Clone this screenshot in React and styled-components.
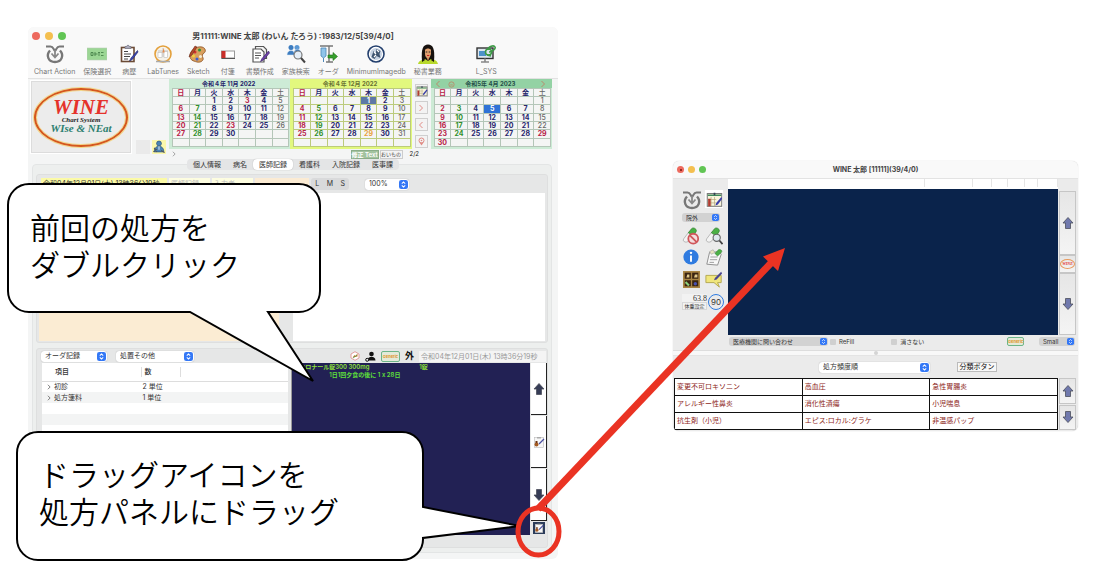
import React, { useState } from "react";
import styled, { createGlobalStyle, css } from "styled-components";

const GlobalStyle = createGlobalStyle`
  * {
    box-sizing: border-box;
  }
  body {
    margin: 0;
    background: #fff;
    font-family: Inter, "Noto Sans CJK JP", sans-serif;
    font-size: 7px;
    line-height: 10px;
    color: #333;
  }
  button, input, select {
    font: inherit;
    color: inherit;
    margin: 0;
    padding: 0;
    border: 0;
    background: none;
  }
  svg {
    display: block;
    flex: none;
  }
`;

const Slide = styled.main`
  position: relative;
  display: grid;
  grid-template-columns: 530fr 405fr;
  gap: 115px;
  align-items: start;
  min-height: 580px;
  padding: 27px 18px 20px 28px;
  overflow: hidden;
`;

/* ---------- window parts ---------- */

const Window = styled.section`
  min-width: 0;
  border-radius: 6px;
  background: #f4f5f5;
  overflow: hidden;
`;

const OrderWindow = styled(Window)`
  margin-top: 134px;
  background: #ebebeb;
  box-shadow: 0 0 1px #bbb;
`;

const TitleBar = styled.header`
  display: grid;
  grid-template-columns: 1fr auto 1fr;
  align-items: center;
  height: 17px;
  padding: 0 4px;
  background: #f9f9f9;
`;

const Title = styled.h1`
  margin: 0;
  font-size: ${(p) => (p.$small ? "7px" : "8px")};
  font-weight: 700;
  color: #444;
  white-space: nowrap;
`;

const Lights = styled.div`
  display: flex;
  gap: ${(p) => (p.$small ? "4px" : "5px")};
`;

const Light = styled.button`
  display: grid;
  place-items: center;
  width: ${(p) => (p.$small ? "7px" : "8px")};
  height: ${(p) => (p.$small ? "7px" : "8px")};
  border-radius: 50%;
  background: ${(p) => p.$color};
`;

const Dot = styled.span`
  width: 2px;
  height: 2px;
  border-radius: 50%;
  background: #7a130d;
`;

const Toolbar = styled.nav`
  display: flex;
  gap: 8px;
  height: 35px;
  padding: 0 6px;
  background: #f9f9f9;
  border-bottom: 1px solid #e2e2e2;
`;

const ToolButton = styled.button`
  display: flex;
  flex-direction: column;
  align-items: center;
  gap: 3px;
  color: #777;
  white-space: nowrap;
  margin-left: ${(p) => (p.$apart ? "26px" : "0")};
`;

const TopArea = styled.div`
  display: flex;
  height: 80px;
  padding: 0 6px 0 2px;
`;

const LogoBox = styled.button`
  display: grid;
  place-items: center;
  width: 102px;
  height: 74px;
  margin-top: 1px;
  background: #ececec;
  border: 1px solid #fff;
  outline: 1px solid #dcdcdc;
  outline-offset: -2px;
`;

const LogoOval = styled.span`
  display: flex;
  flex-direction: column;
  align-items: center;
  width: 94px;
  height: 59px;
  padding-top: 7px;
  border: 2px solid #d6581c;
  border-radius: 50%;
  box-shadow: 0 0 0 1px #f3d88a, inset 0 0 0 1px #f3d88a;
  font-family: "Liberation Serif", serif;
  font-style: italic;
  font-weight: 700;
  white-space: nowrap;
`;

const LogoName = styled.span`
  font-size: 21px;
  line-height: 20px;
  color: #e5322b;
`;

const LogoSystem = styled.span`
  font-size: 7px;
  line-height: 7px;
  color: #222;
`;

const LogoMotto = styled.span`
  font-size: 11px;
  line-height: 9px;
  color: #2c7f70;
`;

const SideIcons = styled.div`
  display: flex;
  align-items: flex-end;
  gap: 2px;
  width: 37px;
  height: 75px;
  padding-left: 4px;
`;

const BlankBox = styled.span`
  width: 14px;
  height: 14px;
  background: #eaeaea;
`;

const PersonButton = styled.button`
  width: 14px;
  height: 14px;
  background: #fbf7ab;
`;

const CalendarArea = styled.div`
  flex: 1;
  min-width: 0;
`;

const CalendarRow = styled.div`
  display: flex;
  height: 70px;
`;

const CalendarBox = styled.div`
  flex: 1;
  padding: 0 1px 0 3px;
  background: ${(p) => p.$bg};
`;

const CalendarTitle = styled.div`
  display: grid;
  grid-template-columns: 1fr auto 1fr;
  align-items: center;
  height: 9px;
  margin: 0 -1px 0 -3px;
  padding: 0 5px 0 3px;
  background: ${(p) => p.$bg};
  font-weight: 700;
  font-size: 6px;
  color: ${(p) => p.$color};
`;

const CalendarNav = styled.span`
  display: flex;
  align-items: center;
  gap: 6px;
  justify-content: ${(p) => (p.$end ? "flex-end" : "flex-start")};
`;

const Days = styled.table`
  width: 100%;
  height: 59px;
  table-layout: fixed;
  border-collapse: collapse;
`;

const dayColors = {
  red: "#b72046",
  green: "#2f8f2a",
  navy: "#25246b",
  sat: "#666",
  orange: "#e9a13b",
  pick: "#fff",
};

const Day = styled.td`
  padding: 0;
  height: 8px;
  border: 1px solid ${(p) => p.$line};
  background: ${(p) => p.$bg || "#f4f5f4"};
  color: ${(p) => dayColors[p.$tone]};
  font-size: 7px;
  line-height: 7px;
  font-weight: ${(p) => (p.$tone === "sat" ? 500 : 700)};
  text-align: center;
`;

const PagerColumn = styled.div`
  display: flex;
  flex-direction: column;
  gap: 4px;
  width: 19px;
  padding: 5px 3px 0;
`;

const PagerButton = styled.button`
  display: grid;
  place-items: center;
  width: 13px;
  height: 13px;
  border: 1px solid #cfcfcf;
  background: #f3f3f3;
`;

const CalendarFoot = styled.div`
  display: flex;
  align-items: center;
  gap: 1px;
  height: 10px;
  padding: 0 133px 0 2px;
`;

const FixText = styled.button`
  margin-left: auto;
  width: 28px;
  height: 9px;
  background: #a3c39f;
  border: 1px solid #8aad88;
  color: #fff;
  font-size: 6px;
  line-height: 7px;
  font-weight: 600;
  white-space: nowrap;
`;

const Memo = styled(FixText)`
  margin-left: 0;
  width: 23px;
  background: #f4f4f4;
  border-color: #ccc;
  color: #444;
  font-size: 5px;
  font-weight: 400;
`;

const PageCount = styled.span`
  padding-left: 6px;
  font-size: 6px;
  color: #222;
`;

const Tabs = styled.div`
  position: relative;
  display: flex;
  justify-content: space-between;
  width: 212px;
  height: 11px;
  margin: 0 auto;
  border-radius: 4px;
  background: #e4e5e6;
`;

const Tab = styled.button`
  flex: auto;
  border-radius: 4px;
  line-height: 11px;
  white-space: nowrap;
  ${(p) =>
    p.$active &&
    css`
      background: #fff;
      box-shadow: 0 0 1px #999;
    `}
`;

const Body = styled.div`
  display: flex;
  flex-direction: column;
  gap: 5px;
  margin: -6px 6px 6px 4px;
  padding: 9px 3px 4px;
  border: 1px solid #e3e5e5;
  border-radius: 4px;
  background: #edefee;
`;

const Panel = styled.div`
  border: 1px solid #dedfdf;
  border-radius: 3px;
  background: #e6e7e7;
`;

const ChartHead = styled.div`
  display: flex;
  align-items: center;
  gap: 2px;
  height: 18px;
  padding-left: 4px;
`;

const Strip = styled.span`
  width: ${(p) => p.$w}px;
  height: 12px;
  padding: 1px 2px 0;
  background: ${(p) => p.$bg};
  color: ${(p) => p.$color};
  white-space: nowrap;
  overflow: hidden;
`;

const SizeTabs = styled.div`
  display: flex;
  width: 38px;
  height: 12px;
  margin-right: 14px;
  border-radius: 3px;
  background: #d9dadb;
`;

const SizeTab = styled.button`
  flex: 1;
`;

const ChartBody = styled.div`
  display: grid;
  grid-template-columns: 240fr 252fr;
  gap: 14px;
  height: 149px;
  padding: 0 2px 1px;
`;

const Note = styled.div`
  background: ${(p) => p.$bg};
`;

const SelectBox = styled.span`
  position: relative;
  display: block;
  width: ${(p) => p.$w}px;
  height: ${(p) => (p.$grey ? "9px" : "11px")};
  border-radius: 3px;
  background: ${(p) => (p.$grey ? "#d2d2d2" : "#fff")};
  box-shadow: ${(p) => (p.$grey ? "none" : "0 0 1px #999")};

  select {
    display: block;
    width: 100%;
    height: 100%;
    padding: 0 10px 0 4px;
    appearance: none;
    font-size: ${(p) => (p.$grey ? "6px" : "7px")};
  }
  svg {
    position: absolute;
    top: 1px;
    right: 1px;
    pointer-events: none;
  }
`;

const OrderHead = styled.div`
  display: flex;
  align-items: center;
  gap: 5px;
  height: 14px;
  padding: 0 1px 0 4px;
`;

const Gap = styled.span`
  flex: 1;
`;

const Outside = styled.strong`
  font-size: 9px;
  color: #111;
`;

const DateInput = styled.input`
  width: 127px;
  height: 11px;
  padding: 0 2px;
  background: #f4f4f4;
  color: #999;
`;

const OrderBody = styled.div`
  display: flex;
  height: 172px;
  padding-left: 5px;
`;

const TreeBox = styled.div`
  flex: 253;
  margin-right: 3px;
  background: repeating-linear-gradient(#fff 0 11px, #f3f4f4 11px 22px) 0 18px;
`;

const Tree = styled.table`
  width: 100%;
  border-collapse: collapse;
  table-layout: fixed;

  th {
    height: 18px;
    padding: 0 0 0 13px;
    background: #fff;
    border-bottom: 1px solid #ddd;
    font-weight: 500;
    text-align: left;
  }
  th + th {
    padding-left: 4px;
  }
  td {
    height: 11px;
    padding: 0 2px;
  }
`;

const TreeCell = styled.span`
  display: flex;
  align-items: center;
  gap: 2px;
  padding-left: 2px;
`;

const HeadMark = styled.span`
  display: block;
  border-left: ${(p) => (p.$first ? "0" : "1px solid #ddd")};
  margin-left: ${(p) => (p.$first ? "0" : "-4px")};
  padding-left: ${(p) => (p.$first ? "0" : "3px")};
  height: 10px;
`;

const OrderNote = styled.div`
  flex: 237;
  padding: 0 0 0 7px;
  background: #222154;
  border-left: 1px solid #999;
  color: #5fe03a;
  font-size: 6px;
  line-height: 8px;
  font-weight: 600;
`;

const DrugLine = styled.div`
  display: grid;
  grid-template-columns: 120px 1fr;
  color: #8fe03a;
`;

const UsageLine = styled.div`
  padding-left: 30px;
`;

const OrderSide = styled.div`
  display: flex;
  flex-direction: column;
  gap: 1px;
  width: 17px;
  padding-left: 1px;
`;

const SideButton = styled.button`
  display: grid;
  place-items: center;
  height: 52px;
  background: #fff;
  border-right: 1px solid #222;
  border-bottom: 1px solid #222;
`;

const DragButton = styled.button`
  align-self: center;
  width: 12px;
  height: 12px;
  padding: 1px;
  background: #2b3c5a;
`;

const PanelFoot = styled.div`
  height: 12px;
`;

/* ---------- prescription window ---------- */

const RxTop = styled.div`
  display: grid;
  grid-template-columns: 55px 1fr 20px;
  border-top: 1px solid #e3e3e3;
`;

const Palette = styled.div`
  display: flex;
  flex-direction: column;
  gap: 5px;
  padding: 11px 4px 0 9px;
`;

const IconGrid = styled.div`
  display: grid;
  grid-template-columns: 18px 18px;
  gap: 3px 5px;
`;

const IconButton = styled.button`
  display: grid;
  place-items: center;
  height: ${(p) => p.$h || 18}px;
  background: ${(p) => (p.$lit ? "#fff" : "none")};
`;

const WeightRow = styled.div`
  display: flex;
  align-items: center;
  gap: 1px;
`;

const Weight = styled.div`
  width: 25px;
  font-size: 6px;
  line-height: 8px;

  input {
    display: block;
    width: 100%;
    height: 8px;
    background: #f2f2f2;
    font-family: "Liberation Serif", serif;
    font-size: 8px;
    text-align: right;
  }
  button {
    display: block;
    width: 100%;
    height: 8px;
    background: #f2f2f2;
    border: 1px solid #d8d8d8;
    font-size: 5px;
    line-height: 6px;
    white-space: nowrap;
  }
`;

const RxCenter = styled.div`
  min-width: 0;
`;

const Columns = styled.div`
  display: grid;
  grid-template-columns: 196fr 48fr 19fr 16fr 17fr 13fr 20fr;
  height: 10px;
  background: #fff;
`;

const Column = styled.span`
  height: 8px;
  border-right: 1px solid #e5e5e5;
`;

const DropPanel = styled.div`
  height: 146px;
  background: #0a234b;
`;

const RxScroll = styled.div`
  display: flex;
  flex-direction: column;
  padding: 12px 2px 0 1px;
`;

const RxButton = styled.button`
  display: grid;
  place-items: center;
  height: ${(p) => p.$h}px;
  background: linear-gradient(#e6e6e6, #f4f4f4);
  border: 1px solid #c6c6c6;
`;

const MiniLogo = styled.span`
  width: 15px;
  height: 10px;
  border: 1px solid #e89a5c;
  border-radius: 50%;
  font-family: "Liberation Serif", serif;
  font-size: 4px;
  line-height: 7px;
  font-style: italic;
  font-weight: 700;
  color: #e5322b;
`;

const RxFoot = styled.div`
  display: flex;
  align-items: center;
  height: 15px;
  padding: 0 3px 2px 56px;
  font-size: 6px;
`;

const Check = styled.label`
  display: flex;
  align-items: center;
  gap: 3px;
  margin: 0 ${(p) => (p.$wide ? "35px" : "auto")} 0 2px;

  input {
    width: 6px;
    height: 6px;
    appearance: none;
    border-radius: 1px;
    background: #d0d0d0;
  }
`;

const TagButton = styled.button`
  margin-right: 15px;
`;

const Splitter = styled.div`
  display: grid;
  place-items: center;
  height: 6px;
  background: #f8f8f8;
  border-top: 1px solid #ddd;
  border-bottom: 1px solid #e4e4e4;
`;

const Grip = styled.span`
  width: 4px;
  height: 4px;
  border-radius: 50%;
  background: #d4d4d4;
`;

const SetBar = styled.div`
  display: flex;
  align-items: center;
  justify-content: flex-end;
  gap: 27px;
  height: 22px;
  padding-right: 81px;
`;

const KindButton = styled.button`
  width: 40px;
  height: 10px;
  border: 1px solid #bbb;
  background: #f8f8f8;
  line-height: 8px;
  color: #111;
  white-space: nowrap;
`;

const SetArea = styled.div`
  display: grid;
  grid-template-columns: 1fr 20px;
  padding: 0 0 1px 1px;
`;

const SetTable = styled.table`
  width: 100%;
  border-collapse: collapse;
  table-layout: fixed;
  background: #fff;

  td {
    height: 17px;
    padding: 0 2px;
    border: 1px solid #111;
    color: #8c1d18;
  }
`;

const SetScroll = styled.div`
  display: grid;
  gap: 1px;
  padding: 0 2px 0 1px;
`;

/* ---------- annotations over the windows ---------- */

const Marks = styled.svg`
  position: absolute;
  left: 0;
  top: 0;
  pointer-events: none;
`;

const BubbleText = styled.p`
  position: absolute;
  left: ${(p) => p.$x}px;
  top: ${(p) => p.$y}px;
  margin: 0;
  font-family: "Noto Sans CJK JP", sans-serif;
  font-size: 30px;
  line-height: 37px;
  font-weight: 350;
  color: #000;
  white-space: nowrap;
`;

/* ---------- icons ---------- */

const Svg = ({ size = 20, box = 20, children }) => (
  <svg width={size} height={size} viewBox={`0 0 ${box} ${box}`} fill="none" aria-hidden="true">
    {children}
  </svg>
);

const ActionIcon = () => (
  <Svg>
    <path d="M1 2.500h4.500c3 0 2.500 2.500 4.500 4.500M19 2.500h-4.500c-3 0-2.500 2.500-4.500 4.500" stroke="#777" strokeWidth="2" />
    <path d="M5 6.500c-4.500 5-1.500 11.500 5 11.500s9.500-6.500 5-11.500" stroke="#777" strokeWidth="2.400" />
    <path d="M10 6v7M6.500 9.500L10 13.500l3.500-4" stroke="#888" strokeWidth="1.800" />
  </Svg>
);

const InsuranceIcon = () => (
  <Svg>
    <rect x="0" y="4" width="20" height="12" fill="#9bd694" stroke="#b8ccb5" strokeWidth=".6" />
    <path d="M4 8.500h2v3H4zM8 8v4M7.500 10h3M11 8.500h2M12 8.500v3.500M14 8.500h2.500M14 11.500h2.500" stroke="#3f7a43" strokeWidth=".8" />
  </Svg>
);

const ClipIcon = ({ size = 20 }) => (
  <Svg size={size}>
    <rect x="2.500" y="3.500" width="12.500" height="14" fill="#fff" stroke="#6b4a35" strokeWidth="1.600" />
    <path d="M6 4.500V2.500h1.500C8 .8 10 .8 10.500 2.500H12v2z" fill="#aab" stroke="#667" strokeWidth=".6" />
    <path d="M5 7.500h4M5 10h7M5 12.500h6M5 15h4" stroke="#444" />
    <path d="M18.500 6.500L12 14l-1.500 3 2.800-1.500L19 8z" fill="#3a44b8" stroke="#22265f" strokeWidth=".6" />
  </Svg>
);

const LabIcon = () => (
  <Svg>
    <circle cx="10" cy="10" r="8" fill="#f6f2ea" stroke="#e3a03c" strokeWidth="1.600" />
    <path d="M5 7h10M10 4v9" stroke="#bbb" strokeWidth=".8" />
    <rect x="5" y="8.500" width="4" height="5" fill="#fff" stroke="#bbb" strokeWidth=".6" />
    <rect x="11" y="7.500" width="3.500" height="6" fill="#fff" stroke="#bbb" strokeWidth=".6" />
    <path d="M9.300 8.500l1.500-4.500.8 4.500z" fill="#e88a4a" />
    <path d="M3 17.500h14" stroke="#aaa" strokeWidth="1.600" />
  </Svg>
);

const PaletteIcon = () => (
  <Svg>
    <path d="M2 12C2 6 8 2 14 3c4 1 4 5 2 6s-2 3-1 5-2 5-6 4-7-2-7-6z" fill="#d9a05e" stroke="#8a4f22" strokeWidth=".8" />
    <circle cx="7" cy="8" r="1.500" fill="#d32f2f" />
    <circle cx="11.500" cy="6" r="1.500" fill="#2f8f3a" />
    <circle cx="5.500" cy="12" r="1.500" fill="#f2d03a" />
    <circle cx="12.500" cy="12.500" r="1.500" fill="#f6ead2" />
    <circle cx="9" cy="15" r="1.500" fill="#3a5fd3" />
    <path d="M7 2L2 10l-1 3 3-2 5-8z" fill="#b5482a" stroke="#5c2412" strokeWidth=".5" />
  </Svg>
);

const StickyIcon = () => (
  <Svg>
    <rect x="3.500" y="7" width="13" height="7" fill="#fff" stroke="#999" />
    <rect x="3.500" y="7" width="4" height="7" fill="#c92f2a" />
    <path d="M3.500 14.500h13.500" stroke="#555" />
  </Svg>
);

const DocIcon = () => (
  <Svg>
    <path d="M5.500 2.500h8l3 3v9h-11z" fill="#f4f4f4" stroke="#555" strokeWidth="1.200" />
    <path d="M3 5h8l3 3v10H3z" fill="#fff" stroke="#555" strokeWidth="1.200" />
    <path d="M5 9h6M5 11.500h6M5 14h4" stroke="#555" />
    <path d="M18.500 7L12 14.500l-1.500 3 3-1.500 6-7z" fill="#6b3fa8" stroke="#3a2365" strokeWidth=".6" />
  </Svg>
);

const FamilyIcon = () => (
  <Svg>
    <circle cx="5" cy="3.500" r="2.500" fill="#3c7cc0" />
    <circle cx="11" cy="3.500" r="2.500" fill="#5a97d4" />
    <path d="M1 11c0-6 8-6 8 0zM8 9c0-5 7-5 7 0z" fill="#3c7cc0" stroke="#d6e6f5" strokeWidth=".5" />
    <circle cx="12" cy="11" r="4" fill="#e4eef8" stroke="#777" strokeWidth="1.200" />
    <path d="M15 14l4 4.500" stroke="#444" strokeWidth="2" />
  </Svg>
);

const DripIcon = () => (
  <Svg>
    <path d="M2 2h13M11 2v16M8 18h7" stroke="#777" strokeWidth="1.400" />
    <path d="M3 4h5v8l-2.500 2L3 12z" fill="#8fc4ea" stroke="#4d88b8" strokeWidth=".8" />
    <path d="M5.500 14v4" stroke="#4d88b8" />
    <path d="M10 11h5V8.500l4.500 4-4.500 4V14h-5z" fill="#36a02d" stroke="#1f6d18" strokeWidth=".6" />
  </Svg>
);

const ImageDbIcon = () => (
  <Svg>
    <circle cx="10" cy="10" r="8" fill="#fff" stroke="#24406e" strokeWidth="1.600" />
    <circle cx="10" cy="10" r="6" fill="#c6d2e2" />
    <path d="M5.500 13l2-6 2 3 1-5 4 2-1 3 1 4-4-2-2 3z" fill="#3e5470" />
    <path d="M8 8l2 2M11 6l2 2M8 13l2-2" stroke="#fff" strokeWidth="1.200" />
  </Svg>
);

const SecretaryIcon = () => (
  <Svg>
    <path d="M4 17C3 5 5 .5 10 .5S17 5 16 17z" fill="#17120f" />
    <path d="M0 20c1-4 4-4 7-5l3 2 3-2c4 1 6 1 7 5z" fill="#b8d92c" />
    <path d="M8 12l2 5 2-5z" fill="#d08c5c" />
    <path d="M7 6c1-2 5-2 6 0v4c-1 3-2 4-3 4s-3-1-3-4z" fill="#e0a06f" />
    <path d="M7.700 8h1.600M10.700 8h1.600" stroke="#222" />
    <path d="M9 11.500h2.300" stroke="#c22" />
    <path d="M4 12l3 4-3 2zM16 12l-3 4 3 2z" fill="#17120f" />
  </Svg>
);

const SystemIcon = () => (
  <Svg>
    <rect x="1" y="4" width="16" height="10.500" fill="#dde6ee" stroke="#333" strokeWidth="1.400" />
    <path d="M3 7h7v5H3z" fill="#4d92c9" />
    <path d="M9 14.500v3M5 18h8" stroke="#888" strokeWidth="1.600" />
    <circle cx="12.500" cy="8" r="3" stroke="#3d9a46" strokeWidth="1.600" />
    <path d="M12 6c0-4 6-5 7-3s-3 5-6 5M11 11l4 1" stroke="#3d9a46" strokeWidth="1.600" />
  </Svg>
);

const PersonIcon = () => (
  <Svg size={14}>
    <circle cx="10" cy="5" r="3.500" fill="#4b83b5" stroke="#2d5578" />
    <path d="M3 17c0-11 14-11 14 0z" fill="#4b83b5" stroke="#2d5578" />
    <path d="M3 11l4 6M2 17l5-4M13 15l5 3" stroke="#555" strokeWidth="1.500" />
    <path d="M10 9v5" stroke="#dfe9f2" strokeWidth="1.500" />
  </Svg>
);

const ScheduleIcon = ({ size = 12 }) => (
  <Svg size={size}>
    <rect x="1.500" y="3" width="17" height="15" fill="#f9f5dc" stroke="#777" strokeWidth="1.200" />
    <path d="M2 5h16" stroke="#3f8a5a" strokeWidth="2" />
    <path d="M2 10h10M2 14h10M6 7v11M10 7v11" stroke="#b6a77a" strokeWidth=".8" />
    <path d="M2.500 9h3v9h-3z" fill="#b13b32" />
    <path d="M18 7l-6 7-1 3 3-1 5-7z" fill="#3a3fa8" />
    <path d="M9 2h2v3H9z" fill="#345" />
  </Svg>
);

const Chevron = ({ flip, color = "#e08a84", size = 8 }) => (
  <Svg size={size} box={8}>
    <path d={flip ? "M5.500 1L2.500 4l3 3" : "M2.500 1l3 3-3 3"} stroke={color} />
  </Svg>
);

const FaceIcon = () => (
  <Svg size={7} box={8}>
    <circle cx="4" cy="4" r="3" stroke="#b98a6c" />
    <path d="M2.500 4.500h3" stroke="#b98a6c" />
  </Svg>
);

const PinIcon = () => (
  <Svg size={9} box={9}>
    <circle cx="4.500" cy="3.500" r="2.500" stroke="#e08a84" />
    <path d="M4.500 8.500L2.500 5.500h4z" fill="#e08a84" />
    <circle cx="4.500" cy="3.500" r=".8" fill="#e08a84" />
  </Svg>
);

const UpDown = ({ size = 8 }) => (
  <Svg size={size} box={8}>
    <rect width="8" height="8" rx="2" fill="#3478f6" />
    <path d="M2.500 3.200L4 1.700l1.500 1.500M2.500 4.800L4 6.300l1.500-1.500" stroke="#fff" strokeWidth=".9" />
  </Svg>
);

const Arrow = ({ down, light }) => (
  <Svg size={12} box={12}>
    <path
      d={down ? "M6 11.500L1 6h2.500V.5h5V6H11z" : "M6 .5L1 6h2.500v5.500h5V6H11z"}
      fill={light ? "#7079ad" : "#363c56"}
      stroke="#4b4f5c"
      strokeWidth=".8"
    />
  </Svg>
);

const MortarIcon = ({ size = 12 }) => (
  <Svg size={size} box={12}>
    <rect x="1.500" y="1.500" width="9" height="10" fill="#f7f7f7" stroke="#bbb" strokeWidth=".6" />
    <path d="M4 2.500V1h4v1.500z" fill="#aaa" />
    <circle cx="3.500" cy="8.500" r="2" fill="#a35a22" />
    <path d="M2.500 5h2v2h-2z" fill="#6e3410" />
    <path d="M11 3L6 8" stroke="#4a4fa0" strokeWidth="1.300" />
  </Svg>
);

const HexIcon = () => (
  <Svg size={10} box={10}>
    <path d="M5 .7L9 3v4L5 9.300 1 7V3z" fill="#fff" stroke="#d88" strokeWidth=".8" />
    <path d="M2.500 6.500l2-2.500 1 1L7.500 2.500v3z" fill="#c9752f" />
    <path d="M3 7l4-3" stroke="#4a9a4a" strokeWidth=".8" />
  </Svg>
);

const DoctorIcon = () => (
  <Svg size={11} box={11}>
    <circle cx="6.500" cy="3" r="2.300" fill="#111" />
    <path d="M2.500 9.500c0-5 8-5 8 0z" fill="#111" />
    <circle cx="2.200" cy="8.800" r="1.500" fill="#e6e7e7" stroke="#111" />
  </Svg>
);

const TagArt = styled.span`
  display: block;
  width: ${(p) => (p.$small ? "17px" : "19px")};
  height: ${(p) => (p.$small ? "9px" : "11px")};
  border: 1px solid #6db588;
  border-radius: 2px;
  background: #e3ead9;
  color: #e0951f;
  font-size: 4px;
  line-height: ${(p) => (p.$small ? "7px" : "9px")};
  font-weight: 700;
  text-align: center;
`;

const Capsule = () => (
  <>
    <path d="M2 13L8 5l5 3-6 8c-3 2-7 0-5-3z" fill="#f4f4f4" stroke="#999" strokeWidth=".7" />
    <path d="M7 6.500L10.500 2c2-2.500 7 .5 5 3.500L12.500 10z" fill="#4bb046" stroke="#2f7c2c" strokeWidth=".7" />
  </>
);

const NoDrugIcon = () => (
  <Svg size={18}>
    <Capsule />
    <circle cx="12.500" cy="13" r="5.500" stroke="#d0565a" strokeWidth="2" fill="#f3dede" />
    <path d="M8.700 9.300l7.600 7.600" stroke="#d0565a" strokeWidth="2" />
  </Svg>
);

const FindDrugIcon = () => (
  <Svg size={18}>
    <Capsule />
    <circle cx="13" cy="12" r="4" fill="#dfe8f0" stroke="#666" strokeWidth="1.200" />
    <path d="M16 15l3.500 4" stroke="#444" strokeWidth="2" />
  </Svg>
);

const InfoIcon = () => (
  <Svg size={16}>
    <circle cx="10" cy="10" r="9.500" fill="#2f7be0" />
    <circle cx="10" cy="4.800" r="1.500" fill="#fff" />
    <path d="M10 8v8" stroke="#fff" strokeWidth="2.400" />
  </Svg>
);

const SheetIcon = () => (
  <Svg size={18}>
    <path d="M5 5l11-1 2 3-4 12-12-1z" fill="#f8f8f8" stroke="#888" />
    <path d="M6 10h8M5.500 13h8M5 16h5" stroke="#999" />
    <path d="M5 4l4-2 2 3-4 2z" fill="#e8e5c0" stroke="#999" strokeWidth=".6" />
    <path d="M11 6l4-4c2-1 5 1 3 3l-4 4z" fill="#4bb046" stroke="#2f7c2c" strokeWidth=".6" />
  </Svg>
);

const ShelfIcon = () => (
  <Svg size={17}>
    <rect x="1" y="1" width="18" height="18" fill="#3a2411" stroke="#a88443" strokeWidth="2" />
    <path d="M10 1v18M1 10h18" stroke="#a88443" strokeWidth="1.600" />
    <path d="M4 7.500h3.500V4H5zM13 7.500h4V4h-3z" fill="#e2c98a" />
    <path d="M3 13l4 4" stroke="#8bd07c" strokeWidth="2.400" />
    <circle cx="14.500" cy="15" r="2" fill="#4a50b0" />
  </Svg>
);

const CommentIcon = () => (
  <Svg size={18}>
    <path d="M1 6h17v8h-4l2 5-6-5H1z" fill="#f0e67c" stroke="#b0a44a" />
    <path d="M18 2l-7 7-1 2.500 3-1L19 4z" fill="#4a4690" />
  </Svg>
);

const DaysArt = styled.span`
  display: grid;
  place-items: center;
  width: 16px;
  height: 16px;
  border: 1px solid #2f7be0;
  border-radius: 50%;
  font-size: 8px;
  color: #333;
`;

/* ---------- data ---------- */

const tools = [
  ["Chart Action", ActionIcon],
  ["保険選択", InsuranceIcon],
  ["病歴", ClipIcon],
  ["LabTunes", LabIcon],
  ["Sketch", PaletteIcon],
  ["付箋", StickyIcon],
  ["書類作成", DocIcon],
  ["家族検索", FamilyIcon],
  ["オーダ", DripIcon],
  ["MinimumImagedb", ImageDbIcon],
  ["秘書業務", SecretaryIcon],
  ["L_SYS", SystemIcon],
];

const calendars = [
  { title: "令和４年 11月 2022", bg: "#cdebd6", head: "#cdebd6", line: "#b4c6b8", start: 2, last: 30, red: [3, 23], color: "#25246b" },
  { title: "令和４年 12月 2022", bg: "#e2f87e", head: "#e2f87e", line: "#bccb7c", start: 4, last: 31, red: [], orange: 29, pick: 1, pickBg: "#5d78a6", color: "#6b7434" },
  { title: "令和5年 4月 2023", bg: "#cdebd6", head: "#93d2a4", line: "#b4c6b8", start: 6, last: 30, red: [29], pick: 5, pickBg: "#2f72d6", color: "#25504a", arrows: true },
];

const weekdays = ["日", "月", "火", "水", "木", "金", "土"];
const tabNames = ["個人情報", "病名", "医師記録", "看護科", "入院記録", "医事課"];
const rxSets = [
  ["変更不可ロキソニン", "高血圧", "急性胃腸炎"],
  ["アレルギー性鼻炎", "消化性潰瘍", "小児喘息"],
  ["抗生剤（小児）", "エピス:ロカル:グラケ", "非温感パップ"],
];

const toneOf = (cal, day, col) => {
  if (day === cal.pick) return "pick";
  if (day === cal.orange) return "orange";
  if (col === 0 || cal.red.includes(day)) return "red";
  if (col === 1) return "green";
  return col === 6 ? "sat" : "navy";
};

function Calendar({ cal }) {
  const weeks = [0, 1, 2, 3, 4, 5];
  return (
    <CalendarBox $bg={cal.bg}>
      <CalendarTitle $bg={cal.head} $color={cal.color}>
        <CalendarNav>
          {cal.arrows && (
            <>
              <Chevron flip color="#b98a6c" />
              <FaceIcon />
            </>
          )}
        </CalendarNav>
        <span>{cal.title}</span>
        <CalendarNav $end>{cal.arrows && <Chevron color="#b98a6c" />}</CalendarNav>
      </CalendarTitle>
      <Days>
        <thead>
          <tr>
            {weekdays.map((name, col) => (
              <Day as="th" key={name} $line={cal.line} $tone={col === 0 ? "red" : col === 6 ? "sat" : "navy"}>
                {name}
              </Day>
            ))}
          </tr>
        </thead>
        <tbody>
          {weeks.map((week) => (
            <tr key={week}>
              {weekdays.map((name, col) => {
                const day = week * 7 + col - cal.start + 1;
                const shown = day > 0 && day <= cal.last;
                return (
                  <Day
                    key={name}
                    $line={cal.line}
                    $tone={toneOf(cal, day, col)}
                    $bg={shown && day === cal.pick ? cal.pickBg : undefined}
                  >
                    {shown ? day : ""}
                  </Day>
                );
              })}
            </tr>
          ))}
        </tbody>
      </Days>
    </CalendarBox>
  );
}

function Dropdown({ label, value, w, grey, className }) {
  return (
    <SelectBox $w={w} $grey={grey} className={className}>
      <select aria-label={label} defaultValue={value}>
        <option>{value}</option>
      </select>
      <UpDown size={grey ? 7 : 9} />
    </SelectBox>
  );
}

const TreatSelect = styled(Dropdown)`
  margin-left: 4px;
`;

function WindowLights({ small }) {
  return (
    <Lights $small={small}>
      <Light $small={small} $color="#ed6a5e" aria-label="閉じる">
        {small && <Dot />}
      </Light>
      <Light $small={small} $color="#f4bf4f" aria-label="しまう" />
      <Light $small={small} $color="#61c554" aria-label="拡大" />
    </Lights>
  );
}

function ChartWindow() {
  const [tab, setTab] = useState("医師記録");

  return (
    <Window>
      <TitleBar>
        <WindowLights />
        <Title>男11111:WINE 太郎 (わいん たろう) :1983/12/5[39/4/0]</Title>
      </TitleBar>
      <Toolbar>
        {tools.map(([name, Icon]) => (
          <ToolButton key={name} $apart={name === "L_SYS"}>
            <Icon />
            {name}
          </ToolButton>
        ))}
      </Toolbar>
      <TopArea>
        <LogoBox>
          <LogoOval>
            <LogoName>WINE</LogoName>
            <LogoSystem>Chart System</LogoSystem>
            <LogoMotto>WIse &amp; NEat</LogoMotto>
          </LogoOval>
        </LogoBox>
        <SideIcons>
          <BlankBox />
          <PersonButton aria-label="患者">
            <PersonIcon />
          </PersonButton>
        </SideIcons>
        <CalendarArea>
          <CalendarRow>
            <Calendar cal={calendars[0]} />
            <Calendar cal={calendars[1]} />
            <PagerColumn>
              <PagerButton aria-label="予定"><ScheduleIcon /></PagerButton>
              <PagerButton aria-label="次"><Chevron /></PagerButton>
              <PagerButton aria-label="前"><Chevron flip /></PagerButton>
              <PagerButton aria-label="今日"><PinIcon /></PagerButton>
            </PagerColumn>
            <Calendar cal={calendars[2]} />
          </CalendarRow>
          <CalendarFoot>
            <Chevron color="#888" size={6} />
            <FixText>修正 Text</FixText>
            <Memo>おいもの</Memo>
            <PageCount>2/2</PageCount>
          </CalendarFoot>
        </CalendarArea>
      </TopArea>
      <Tabs>
        {tabNames.map((name) => (
          <Tab key={name} $active={name === tab} onClick={() => setTab(name)}>
            {name}
          </Tab>
        ))}
      </Tabs>
      <Body>
        <Panel>
          <ChartHead>
            <Strip $w={126} $bg="#fbfaa6" $color="#333">令和04年12月01日(木) 13時36分19秒</Strip>
            <Strip $w={41} $bg="#fdfde0" $color="#bbb">医師記録</Strip>
            <Strip $w={41} $bg="#fdfde0" $color="#bbb">入力者</Strip>
            <Strip $w={54} $bg="#fbebd3" $color="#bbb" />
            <SizeTabs>
              <SizeTab>L</SizeTab>
              <SizeTab>M</SizeTab>
              <SizeTab>S</SizeTab>
            </SizeTabs>
            <Dropdown label="表示倍率" value="100%" w={44} />
          </ChartHead>
          <ChartBody>
            <Note $bg="#fbecd3" />
            <Note $bg="#fff" />
          </ChartBody>
        </Panel>
        <Panel>
          <OrderHead>
            <Dropdown label="記録" value="オーダ記録" w={66} />
            <TreatSelect label="処置" value="処置その他" w={78} />
            <Gap />
            <HexIcon />
            <DoctorIcon />
            <TagArt>Generic</TagArt>
            <Outside>外</Outside>
            <DateInput aria-label="日時" defaultValue="令和04年12月01日(木) 13時36分19秒" />
          </OrderHead>
          <OrderBody>
            <TreeBox>
              <Tree>
                <colgroup>
                  <col width="40%" />
                  <col width="16%" />
                  <col />
                </colgroup>
                <thead>
                  <tr>
                    <th><HeadMark $first>項目</HeadMark></th>
                    <th><HeadMark>数</HeadMark></th>
                    <th><HeadMark /></th>
                  </tr>
                </thead>
                <tbody>
                  <tr>
                    <td><TreeCell><Chevron color="#555" size={6} />初診</TreeCell></td>
                    <td colSpan={2}>2 単位</td>
                  </tr>
                  <tr>
                    <td><TreeCell><Chevron color="#555" size={6} />処方箋料</TreeCell></td>
                    <td colSpan={2}>1 単位</td>
                  </tr>
                </tbody>
              </Tree>
            </TreeBox>
            <OrderNote>
              <DrugLine>
                <span>カロナール錠300 300mg</span>
                <span>1錠</span>
              </DrugLine>
              <UsageLine>1日1回夕食の後に 1 x 28日</UsageLine>
            </OrderNote>
            <OrderSide>
              <SideButton aria-label="上へ"><Arrow /></SideButton>
              <SideButton aria-label="処方"><MortarIcon /></SideButton>
              <SideButton aria-label="下へ"><Arrow down /></SideButton>
              <DragButton aria-label="ドラッグ"><MortarIcon size={10} /></DragButton>
            </OrderSide>
          </OrderBody>
          <PanelFoot />
        </Panel>
      </Body>
    </Window>
  );
}

function PrescriptionWindow() {
  return (
    <OrderWindow>
      <TitleBar>
        <WindowLights small />
        <Title $small>WINE 太郎 [11111](39/4/0)</Title>
      </TitleBar>
      <RxTop>
        <Palette>
          <IconGrid>
            <IconButton aria-label="Chart Action"><ActionIcon /></IconButton>
            <IconButton $lit aria-label="予定"><ScheduleIcon size={17} /></IconButton>
          </IconGrid>
          <Dropdown label="院内外" value="院外" w={38} grey />
          <IconGrid>
            <IconButton aria-label="中止"><NoDrugIcon /></IconButton>
            <IconButton aria-label="薬剤検索"><FindDrugIcon /></IconButton>
            <IconButton aria-label="情報"><InfoIcon /></IconButton>
            <IconButton aria-label="処方箋"><SheetIcon /></IconButton>
            <IconButton $h={20} aria-label="薬棚"><ShelfIcon /></IconButton>
            <IconButton $h={20} aria-label="コメント"><CommentIcon /></IconButton>
          </IconGrid>
          <WeightRow>
            <Weight>
              <input aria-label="体重" defaultValue="63.8" />
              <button>体重設定</button>
            </Weight>
            <DaysArt>90</DaysArt>
          </WeightRow>
        </Palette>
        <RxCenter>
          <Columns>
            <Column />
            <Column />
            <Column />
            <Column />
            <Column />
            <Column />
            <Column />
          </Columns>
          <DropPanel />
        </RxCenter>
        <RxScroll>
          <RxButton $h={64} aria-label="上へ"><Arrow light /></RxButton>
          <RxButton $h={18} aria-label="WINE"><MiniLogo>WINE</MiniLogo></RxButton>
          <RxButton $h={62} aria-label="下へ"><Arrow down light /></RxButton>
        </RxScroll>
      </RxTop>
      <RxFoot>
        <Dropdown label="問い合わせ" value="医療機関に問い合わせ" w={99} grey />
        <Check $wide>
          <input type="checkbox" />
          ReFill
        </Check>
        <Check>
          <input type="checkbox" />
          消さない
        </Check>
        <TagButton aria-label="Generic"><TagArt $small>Generic</TagArt></TagButton>
        <Dropdown label="サイズ" value="Small" w={36} grey />
      </RxFoot>
      <Splitter>
        <Grip />
      </Splitter>
      <SetBar>
        <Dropdown label="並び順" value="処方頻度順" w={111} />
        <KindButton>分類ボタン</KindButton>
      </SetBar>
      <SetArea>
        <SetTable>
          <tbody>
            {rxSets.map((row) => (
              <tr key={row[0]}>
                {row.map((name) => (
                  <td key={name}>{name}</td>
                ))}
              </tr>
            ))}
          </tbody>
        </SetTable>
        <SetScroll>
          <RxButton aria-label="上へ"><Arrow light /></RxButton>
          <RxButton aria-label="下へ"><Arrow down light /></RxButton>
        </SetScroll>
      </SetArea>
    </OrderWindow>
  );
}

function App() {
  return (
    <>
      <GlobalStyle />
      <Slide>
        <ChartWindow />
        <PrescriptionWindow />
        <Marks width="1096" height="580" viewBox="0 0 1096 580" aria-hidden="true">
          <g fill="#fff" stroke="#000" strokeWidth="2">
            <path d="M29 184H299a21 21 0 0 1 21 21V291a21 21 0 0 1-21 21H268L313 381L190 312H29a21 21 0 0 1-21-21V205a21 21 0 0 1 21-21z" />
            <path d="M38 432H402a21 21 0 0 1 21 21V507L520 526L423 538a21 21 0 0 1-21 22H38a21 21 0 0 1-21-21V453a21 21 0 0 1 21-21z" />
          </g>
          <ellipse cx="538.500" cy="531.500" rx="20.500" ry="23.500" fill="none" stroke="#ea3323" strokeWidth="5" />
          <path d="M538 509L771 263" stroke="#ea3323" strokeWidth="7" />
          <path d="M785 248L763 256.500L778 271z" fill="#ea3323" />
        </Marks>
        <BubbleText $x={30} $y={208}>
          前回の処方を
          <br />
          ダブルクリック
        </BubbleText>
        <BubbleText $x={39} $y={455}>
          ドラッグアイコンを
          <br />
          処方パネルにドラッグ
        </BubbleText>
      </Slide>
    </>
  );
}

export default App;
